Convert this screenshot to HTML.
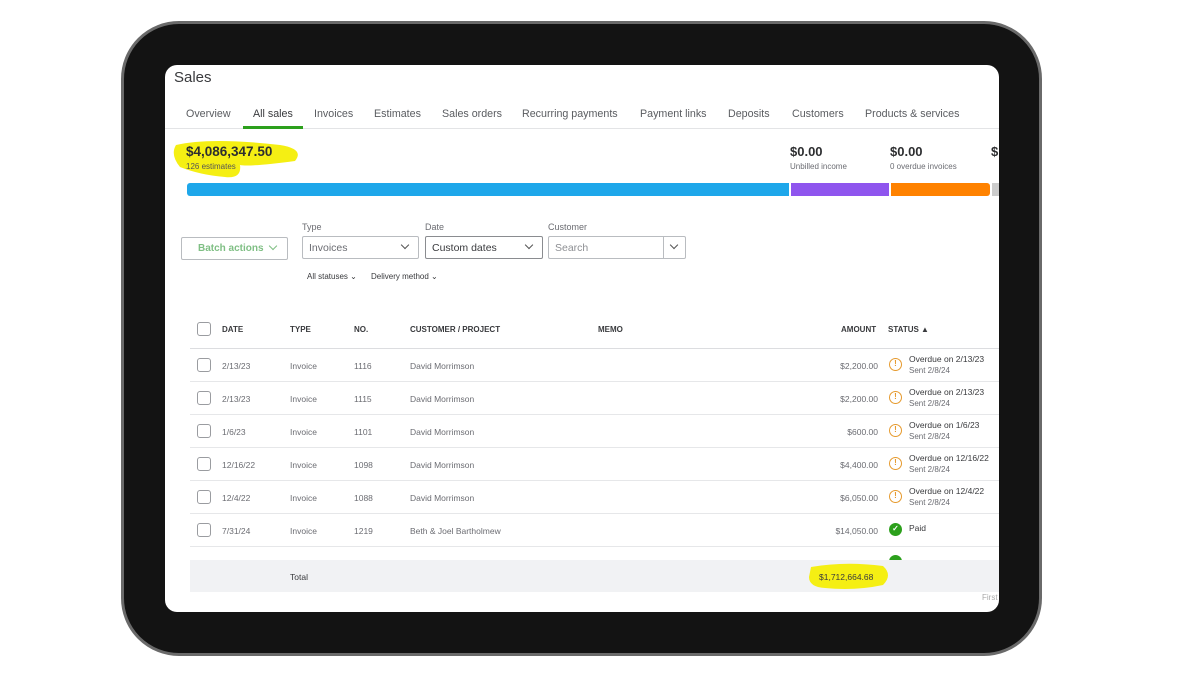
<!DOCTYPE html>
<html><head><style>
*{margin:0;padding:0;box-sizing:border-box}
body{width:1200px;height:675px;background:#fff;position:relative;overflow:hidden;font-family:"Liberation Sans",sans-serif;color:#393a3d}
.a{position:absolute;white-space:nowrap}
.dev{position:absolute;left:121px;top:21px;width:921px;height:635px;border-radius:58px;background:#131313;border:3px solid #6a6a6a}
.scr{position:absolute;left:165px;top:65px;width:834px;height:547px;background:#fff;border-radius:12px;overflow:hidden}
.tab{top:43px;font-size:10.7px;color:#5a5c60}
.box{position:absolute;border:1px solid #b9bcc0;border-radius:2px;height:23px;font-size:10.5px;color:#6b6c72;padding:5px 6px}
.chev{position:absolute;width:6px;height:6px;border-right:1.3px solid #555;border-bottom:1.3px solid #555;transform:rotate(45deg)}
.cb{position:absolute;left:32px;width:14px;height:14px;border:1px solid #9a9ca0;border-radius:3px}
.row{position:absolute;left:25px;width:809px;height:33px;border-bottom:1px solid #e6e7e9;font-size:8.5px;color:#6b6c72}
.row .a{top:12px}
.ic{position:absolute;left:699px;top:9px;width:13px;height:13px;border-radius:50%;border:1.5px solid #e69a2e;font-size:8px;color:#e69a2e;text-align:center;line-height:10px;font-weight:bold}
.st{left:719px;top:5px!important;font-size:8.5px;color:#393a3d;line-height:11px}
.st span{font-size:8px;color:#6b6c72}
.h{font-size:8px;font-weight:bold;color:#393a3d;top:260px}
.lb{top:157px;font-size:9px;color:#6b6c72}
</style></head><body>
<div class="dev"></div>
<div class="scr">
<div class="a" style="left:9px;top:4px;font-size:15px;color:#393a3d">Sales</div>
<div class="a tab" style="left:21px">Overview</div>
<div class="a tab" style="left:88px;color:#393a3d">All sales</div>
<div class="a tab" style="left:149px">Invoices</div>
<div class="a tab" style="left:209px">Estimates</div>
<div class="a tab" style="left:277px">Sales orders</div>
<div class="a tab" style="left:357px">Recurring payments</div>
<div class="a tab" style="left:475px">Payment links</div>
<div class="a tab" style="left:563px">Deposits</div>
<div class="a tab" style="left:627px">Customers</div>
<div class="a tab" style="left:700px">Products &amp; services</div>
<div class="a" style="left:0;top:63px;width:834px;height:1px;background:#e3e4e6"></div>
<div class="a" style="left:78px;top:61px;width:60px;height:3px;background:#2ca01c"></div>
<svg class="a" style="left:5px;top:70px" width="135" height="52"><path d="M6 10 Q40 2 110 10 Q135 14 125 26 Q80 32 70 30 Q72 44 55 42 Q30 40 10 32 Q0 20 6 10Z" fill="#f5ef13"/></svg>
<div class="a" style="left:21px;top:79px;font-size:13.5px;font-weight:bold;color:#2d2e30">$4,086,347.50</div>
<div class="a" style="left:21px;top:97px;font-size:8px;color:#555">126 estimates</div>
<div class="a" style="left:625px;top:79px;font-size:13px;font-weight:bold;color:#2d2e30">$0.00</div>
<div class="a" style="left:625px;top:97px;font-size:8px;color:#6b6c72">Unbilled income</div>
<div class="a" style="left:725px;top:79px;font-size:13px;font-weight:bold;color:#2d2e30">$0.00</div>
<div class="a" style="left:725px;top:97px;font-size:8px;color:#6b6c72">0 overdue invoices</div>
<div class="a" style="left:826px;top:79px;font-size:13px;font-weight:bold;color:#2d2e30">$</div>
<div class="a" style="left:22px;top:118px;width:602px;height:13px;background:#1ea7ea;border-radius:3px 0 0 3px"></div>
<div class="a" style="left:626px;top:118px;width:98px;height:13px;background:#8f55ee"></div>
<div class="a" style="left:726px;top:118px;width:99px;height:13px;background:#ff8200;border-radius:0 3px 3px 0"></div>
<div class="a" style="left:827px;top:118px;width:10px;height:13px;background:#ccc"></div>
<div class="box" style="left:16px;top:172px;width:107px;color:#7fbf84;font-weight:bold;font-size:10px;padding-left:16px">Batch actions</div>
<div class="chev" style="left:105px;top:178px;border-color:#7fbf84"></div>
<div class="a lb" style="left:137px">Type</div>
<div class="box" style="left:137px;top:171px;width:117px">Invoices</div><div class="chev" style="left:237px;top:177px"></div>
<div class="a lb" style="left:260px">Date</div>
<div class="box" style="left:260px;top:171px;width:118px;border-color:#8a8c90;color:#393a3d">Custom dates</div><div class="chev" style="left:361px;top:177px"></div>
<div class="a lb" style="left:383px">Customer</div>
<div class="box" style="left:383px;top:171px;width:138px;color:#8d8f93">Search</div>
<div class="a" style="left:498px;top:171px;width:1px;height:23px;background:#b9bcc0"></div><div class="chev" style="left:506px;top:177px"></div>
<div class="a" style="left:142px;top:207px;font-size:8px;color:#393a3d">All statuses ⌄</div>
<div class="a" style="left:206px;top:207px;font-size:8px;color:#393a3d">Delivery method ⌄</div>
<div class="cb" style="top:257px"></div>
<div class="a h" style="left:57px">DATE</div><div class="a h" style="left:125px">TYPE</div><div class="a h" style="left:189px">NO.</div>
<div class="a h" style="left:245px">CUSTOMER / PROJECT</div><div class="a h" style="left:433px">MEMO</div>
<div class="a h" style="left:676px">AMOUNT</div><div class="a h" style="left:723px">STATUS ▲</div>
<div class="a" style="left:25px;top:283px;width:809px;height:1px;background:#dcdde0"></div>
<div style="position:absolute;left:0;top:284px">
<div class="row" style="top:0"><div class="cb" style="left:7px;top:9px"></div><div class="a" style="left:32px">2/13/23</div><div class="a" style="left:100px">Invoice</div><div class="a" style="left:164px">1116</div><div class="a" style="left:220px">David Morrimson</div><div class="a" style="left:620px;width:68px;text-align:right">$2,200.00</div><div class="ic">!</div><div class="a st">Overdue on 2/13/23<br><span>Sent 2/8/24</span></div></div>
<div class="row" style="top:33px"><div class="cb" style="left:7px;top:9px"></div><div class="a" style="left:32px">2/13/23</div><div class="a" style="left:100px">Invoice</div><div class="a" style="left:164px">1115</div><div class="a" style="left:220px">David Morrimson</div><div class="a" style="left:620px;width:68px;text-align:right">$2,200.00</div><div class="ic">!</div><div class="a st">Overdue on 2/13/23<br><span>Sent 2/8/24</span></div></div>
<div class="row" style="top:66px"><div class="cb" style="left:7px;top:9px"></div><div class="a" style="left:32px">1/6/23</div><div class="a" style="left:100px">Invoice</div><div class="a" style="left:164px">1101</div><div class="a" style="left:220px">David Morrimson</div><div class="a" style="left:620px;width:68px;text-align:right">$600.00</div><div class="ic">!</div><div class="a st">Overdue on 1/6/23<br><span>Sent 2/8/24</span></div></div>
<div class="row" style="top:99px"><div class="cb" style="left:7px;top:9px"></div><div class="a" style="left:32px">12/16/22</div><div class="a" style="left:100px">Invoice</div><div class="a" style="left:164px">1098</div><div class="a" style="left:220px">David Morrimson</div><div class="a" style="left:620px;width:68px;text-align:right">$4,400.00</div><div class="ic">!</div><div class="a st">Overdue on 12/16/22<br><span>Sent 2/8/24</span></div></div>
<div class="row" style="top:132px"><div class="cb" style="left:7px;top:9px"></div><div class="a" style="left:32px">12/4/22</div><div class="a" style="left:100px">Invoice</div><div class="a" style="left:164px">1088</div><div class="a" style="left:220px">David Morrimson</div><div class="a" style="left:620px;width:68px;text-align:right">$6,050.00</div><div class="ic">!</div><div class="a st">Overdue on 12/4/22<br><span>Sent 2/8/24</span></div></div>
<div class="row" style="top:165px"><div class="cb" style="left:7px;top:9px"></div><div class="a" style="left:32px">7/31/24</div><div class="a" style="left:100px">Invoice</div><div class="a" style="left:164px">1219</div><div class="a" style="left:220px">Beth &amp; Joel Bartholmew</div><div class="a" style="left:620px;width:68px;text-align:right">$14,050.00</div><div class="ic" style="background:#2ca01c;border-color:#2ca01c;color:#fff;font-size:8px">✓</div><div class="a st" style="top:9px!important">Paid</div></div>
<div class="ic" style="left:724px;top:206px;background:#2ca01c;border-color:#2ca01c"></div>
</div>
<div class="a" style="left:25px;top:495px;width:809px;height:32px;background:#f1f2f4"></div>
<div class="a" style="left:125px;top:507px;font-size:8.5px;color:#393a3d">Total</div>
<svg class="a" style="left:640px;top:496px" width="86" height="32"><path d="M6 6 Q40 0 78 5 Q88 14 78 24 Q50 30 20 27 Q4 26 4 16Z" fill="#f5ef13"/></svg>
<div class="a" style="left:654px;top:507px;font-size:8.5px;color:#393a3d">$1,712,664.68</div>
<div class="a" style="left:817px;top:528px;font-size:8px;color:#aaa">First</div>
</div>
</body></html>
